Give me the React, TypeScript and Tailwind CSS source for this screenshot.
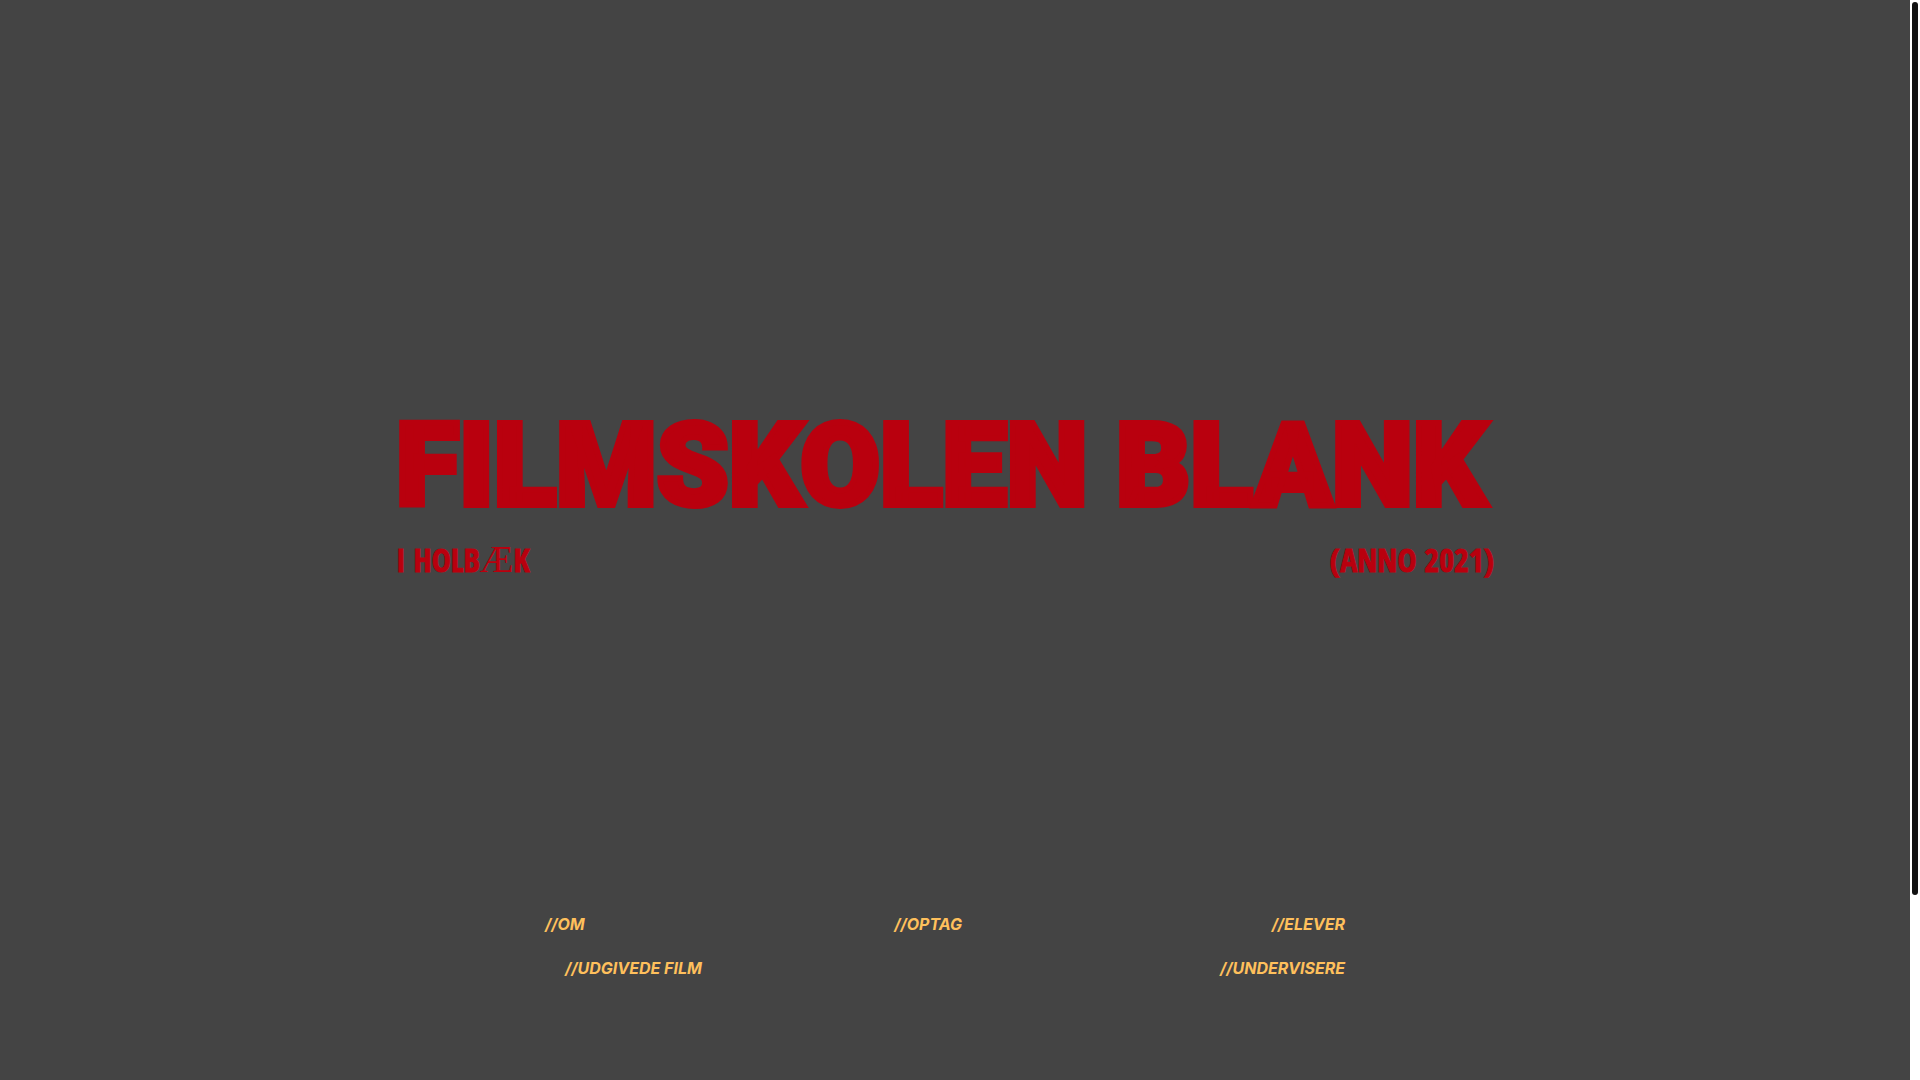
const topLinks = [
  { label: "//OM", href: "#om" },
  { label: "//OPTAG", href: "#optag" },
  { label: "//ELEVER", href: "#elever" },
];

const bottomLinks = [
  { label: "//UDGIVEDE FILM", href: "#udgivede-film" },
  { label: "//UNDERVISERE", href: "#undervisere" },
];

export default function App() {
  return (
    <div className="flex min-h-screen bg-[#444444]">
      <main className="flex flex-1 flex-col items-center pt-[402px] pr-5 pb-[100px]">
        <header className="w-full max-w-[1098px] text-[#b9000e]">
          <h1 className="font-['Roboto',sans-serif] text-[115px] leading-[128px] font-black whitespace-nowrap [-webkit-text-stroke:6px_#b9000e]">
            FILMSKOLEN BLANK
          </h1>
          <div className="mt-1.5 flex justify-between font-['Open_Sans_Condensed','Open_Sans',sans-serif] text-[32px] leading-[48px] font-bold [-webkit-text-stroke:1px_#b9000e]">
            <p>
              I HOLB
              <span className="font-['Liberation_Serif',serif] text-[38px] leading-none font-normal [-webkit-text-stroke:0]">
                Æ
              </span>
              K
            </p>
            <p>(ANNO 2021)</p>
          </div>
        </header>

        <nav className="mt-auto flex w-full max-w-[800px] flex-col gap-5 font-['Inter',sans-serif] text-base font-bold text-[#ffc05c] italic">
          <NavRow links={topLinks} />
          <div className="pl-5">
            <NavRow links={bottomLinks} />
          </div>
        </nav>
      </main>

      <Scrollbar />
    </div>
  );
}

function NavRow({ links }: { links: { label: string; href: string }[] }) {
  return (
    <div className="flex justify-between">
      {links.map((link) => (
        <a key={link.href} href={link.href}>
          {link.label}
        </a>
      ))}
    </div>
  );
}

/** White track with a dark rounded thumb along the right edge. */
function Scrollbar() {
  return (
    <div className="flex w-[10px] flex-col bg-white p-0.5" aria-hidden="true">
      <div className="h-[83%] w-1.5 rounded-full bg-[#111111]" />
    </div>
  );
}
